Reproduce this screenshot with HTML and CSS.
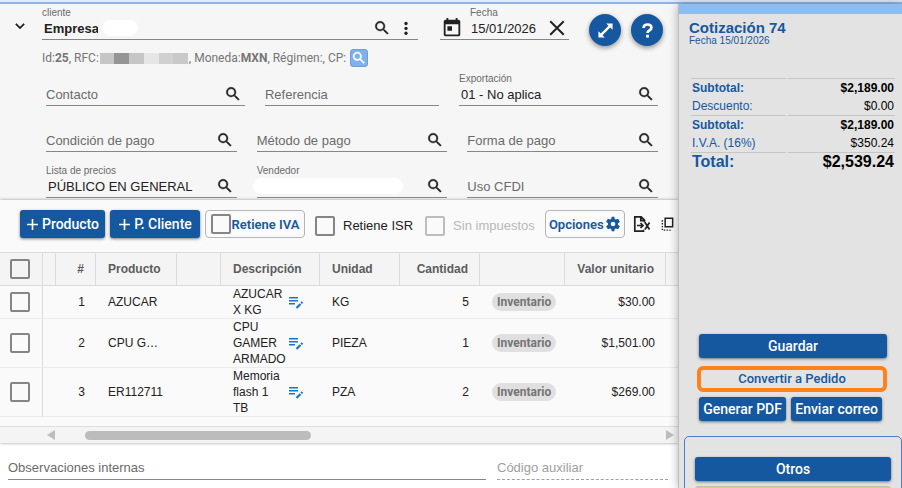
FILE: index.html
```
<!DOCTYPE html>
<html lang="es">
<head>
    <meta charset="UTF-8">
    <meta name="viewport" content="width=device-width, initial-scale=1.0">
    <title>Cotización 74</title>
    <link rel="stylesheet" href="styles.css">
</head>
<body>
    <!-- Shared icons -->
    <svg class="sprite" aria-hidden="true">
        <symbol id="search" viewBox="0 0 24 24"><path d="M15.5 14h-.79l-.28-.27A6.47 6.47 0 0 0 16 9.5 6.5 6.5 0 1 0 9.5 16c1.61 0 3.09-.59 4.23-1.57l.27.28v.79l5 4.99L20.49 19l-4.99-5zm-6 0C7.01 14 5 11.99 5 9.5S7.01 5 9.5 5 14 7.01 14 9.5 11.99 14 9.5 14z" stroke="currentColor" stroke-width="0.5"/></symbol>
        <symbol id="plus" viewBox="0 0 24 24"><path d="M10.5 2h3v8.5H22v3h-8.5V22h-3v-8.5H2v-3h8.5z"/></symbol>
        <symbol id="edit-note" viewBox="0 0 16 16"><path d="M1 3h9v1.500H1zM1 6h9v1.500H1zM1 9h6v1.500H1z"/><path d="M8.500 14l4-4M13.200 9.300l1.300-1.300" fill="none" stroke="currentColor" stroke-width="2.200"/></symbol>
    </svg>

    <div class="top-strip"></div>
    <div class="layout">
        <main class="content">
            <section class="client-form">
                <div class="client-row">
                    <button class="icon-btn chevron" type="button" aria-label="Contraer">
                        <svg class="icon" viewBox="0 0 24 24"><path d="M7.400 8.600 12 13.200l4.600-4.600L18 10l-6 6-6-6z" stroke="currentColor" stroke-width="0.6"/></svg>
                    </button>
                    <div class="field client">
                        <label for="cliente">cliente</label>
                        <div class="control">
                            <input class="client-name" type="text" id="cliente" value="Empresa">
                            <span class="mask short"></span>
                            <button class="icon-btn push" type="button" aria-label="Buscar cliente"><svg class="icon"><use href="#search"/></svg></button>
                            <button class="icon-btn" type="button" aria-label="Más opciones"><svg class="icon" viewBox="0 0 24 24"><circle cx="12" cy="6" r="2.200"/><circle cx="12" cy="12.500" r="2.200"/><circle cx="12" cy="19" r="2.200"/></svg></button>
                        </div>
                    </div>
                    <div class="field date">
                        <label for="fecha">Fecha</label>
                        <div class="control">
                            <svg class="icon calendar" viewBox="0 0 24 24"><path d="M19 3h-1V1h-2v2H8V1H6v2H5a2 2 0 0 0-2 2v14c0 1.100.9 2 2 2h14a2 2 0 0 0 2-2V5a2 2 0 0 0-2-2zm0 16H5V8h14v11zM7 10h5v5H7z"/></svg>
                            <input type="text" id="fecha" value="15/01/2026">
                            <button class="icon-btn" type="button" aria-label="Borrar fecha"><svg class="icon clear" viewBox="0 0 24 24"><path d="M3 3l18 18M21 3L3 21" fill="none" stroke="currentColor" stroke-width="2.600"/></svg></button>
                        </div>
                    </div>
                    <button class="round-btn" type="button" aria-label="Expandir">
                        <svg viewBox="0 0 24 24"><path d="M22 2v9l-3.300-3.300-11 11L11 22H2v-9l3.300 3.300 11-11L13 2z"/></svg>
                    </button>
                    <button class="round-btn" type="button" aria-label="Ayuda">
                        <svg viewBox="0 0 24 24"><path d="M6.500 8.500C6.500 5 9 3.500 12 3.500s5.500 1.600 5.500 4.500c0 4-5.500 3.800-5.500 7.500" fill="none" stroke="currentColor" stroke-width="3.800"/><path d="M10 18h4v4h-4z"/></svg>
                    </button>
                </div>

                <div class="client-meta">
                    <span>Id:<b>25</b>, RFC:</span>
                    <span class="pixels"><i class="c1"></i><i class="c2"></i><i class="c1"></i><i class="c3"></i><i class="c4"></i><i class="c5"></i></span>
                    <span>, Moneda:<b>MXN</b>, Régimen:, CP:</span>
                    <button class="cp-btn" type="button" aria-label="Buscar CP"><svg class="icon"><use href="#search"/></svg></button>
                </div>

                <div class="fields fields-top">
                    <div class="field">
                        <div class="control">
                            <input type="text" placeholder="Contacto" aria-label="Contacto">
                            <button class="icon-btn" type="button" aria-label="Buscar contacto"><svg class="icon"><use href="#search"/></svg></button>
                        </div>
                    </div>
                    <div class="field">
                        <div class="control">
                            <input type="text" placeholder="Referencia" aria-label="Referencia">
                        </div>
                    </div>
                    <div class="field">
                        <label for="exportacion">Exportación</label>
                        <div class="control filled">
                            <input type="text" id="exportacion" value="01 - No aplica">
                            <button class="icon-btn" type="button" aria-label="Buscar exportación"><svg class="icon"><use href="#search"/></svg></button>
                        </div>
                    </div>
                </div>

                <div class="fields">
                    <div class="field">
                        <div class="control">
                            <input type="text" placeholder="Condición de pago" aria-label="Condición de pago">
                            <button class="icon-btn" type="button" aria-label="Buscar condición"><svg class="icon"><use href="#search"/></svg></button>
                        </div>
                    </div>
                    <div class="field">
                        <div class="control">
                            <input type="text" placeholder="Método de pago" aria-label="Método de pago">
                            <button class="icon-btn" type="button" aria-label="Buscar método"><svg class="icon"><use href="#search"/></svg></button>
                        </div>
                    </div>
                    <div class="field">
                        <div class="control">
                            <input type="text" placeholder="Forma de pago" aria-label="Forma de pago">
                            <button class="icon-btn" type="button" aria-label="Buscar forma"><svg class="icon"><use href="#search"/></svg></button>
                        </div>
                    </div>
                    <div class="field">
                        <label for="lista">Lista de precios</label>
                        <div class="control filled">
                            <input type="text" id="lista" value="PÚBLICO EN GENERAL">
                            <button class="icon-btn" type="button" aria-label="Buscar lista"><svg class="icon"><use href="#search"/></svg></button>
                        </div>
                    </div>
                    <div class="field">
                        <span class="caption">Vendedor</span>
                        <div class="control">
                            <span class="mask long"></span>
                            <button class="icon-btn push" type="button" aria-label="Buscar vendedor"><svg class="icon"><use href="#search"/></svg></button>
                        </div>
                    </div>
                    <div class="field">
                        <div class="control">
                            <input type="text" placeholder="Uso CFDI" aria-label="Uso CFDI">
                            <button class="icon-btn" type="button" aria-label="Buscar uso"><svg class="icon"><use href="#search"/></svg></button>
                        </div>
                    </div>
                </div>
            </section>

            <section class="products">
                <div class="toolbar">
                    <button class="btn add" type="button"><svg><use href="#plus"/></svg>Producto</button>
                    <button class="btn add wide" type="button"><svg><use href="#plus"/></svg>P. Cliente</button>
                    <label class="outlined iva"><input type="checkbox">Retiene IVA</label>
                    <label class="check"><input type="checkbox">Retiene ISR</label>
                    <label class="check disabled"><input type="checkbox" disabled>Sin impuestos</label>
                    <button class="outlined options" type="button">Opciones<svg viewBox="0 0 24 24"><path d="M19.430 12.980a7.800 7.800 0 0 0 0-1.960l2.900-2.200-2.600-4.700-3.400 1.300a7.500 7.500 0 0 0-1.700-1L14 1h-4l-.6 3.400a7.500 7.500 0 0 0-1.700 1L4.300 4.100l-2.600 4.700 2.900 2.200a7.800 7.800 0 0 0 0 2l-2.900 2.200 2.600 4.700 3.400-1.300c.5.4 1.100.7 1.700 1L10 23h4l.6-3.400c.6-.3 1.200-.6 1.700-1l3.400 1.300 2.600-4.700zM12 15.500a3.500 3.500 0 1 1 0-7 3.500 3.500 0 0 1 0 7z"/></svg></button>
                    <button class="icon-btn excel" type="button" aria-label="Exportar a Excel">
                        <svg class="line-icon" viewBox="0 0 18 18"><path d="M10.500 14.800v1.400H1.800V1.800h6.400l3.300 3.300v2.400M7.800 2v3.600h3.600M4 10.500h6M7.500 8l2.500 2.500L7.500 13M12 7.500l4.500 7M16.500 7.500L12 14.500" stroke-width="1.700"/></svg>
                    </button>
                    <button class="icon-btn copy" type="button" aria-label="Duplicar">
                        <svg class="line-icon" viewBox="0 0 16 16"><path d="M5.500 1.800h8v9h-8z" stroke-width="1.600"/><path d="M2.500 4v10.500h10" stroke-width="1.500" stroke-dasharray="1.500 1.500"/></svg>
                    </button>
                </div>

                <div class="table-wrap">
                    <table class="grid">
                        <colgroup>
                            <col class="w-check"><col class="w-thin"><col class="w-num"><col class="w-prod"><col class="w-blank"><col class="w-desc"><col class="w-unit"><col class="w-unit"><col class="w-inv"><col><col class="w-last">
                        </colgroup>
                        <thead>
                            <tr>
                                <th class="sel"><input type="checkbox" aria-label="Seleccionar todo"></th>
                                <th></th>
                                <th class="num">#</th>
                                <th>Producto</th>
                                <th></th>
                                <th>Descripción</th>
                                <th>Unidad</th>
                                <th class="num">Cantidad</th>
                                <th></th>
                                <th class="num">Valor unitario</th>
                                <th></th>
                            </tr>
                        </thead>
                        <tbody>
                            <tr>
                                <td class="sel"><input type="checkbox" aria-label="Seleccionar 1"></td>
                                <td></td>
                                <td class="num">1</td>
                                <td>AZUCAR</td>
                                <td></td>
                                <td><div class="desc"><span>AZUCAR X KG</span><svg><use href="#edit-note"/></svg></div></td>
                                <td>KG</td>
                                <td class="num">5</td>
                                <td><span class="chip">Inventario</span></td>
                                <td class="num">$30.00</td>
                                <td></td>
                            </tr>
                            <tr>
                                <td class="sel"><input type="checkbox" aria-label="Seleccionar 2"></td>
                                <td></td>
                                <td class="num">2</td>
                                <td>CPU G…</td>
                                <td></td>
                                <td><div class="desc"><span>CPU GAMER ARMADO</span><svg><use href="#edit-note"/></svg></div></td>
                                <td>PIEZA</td>
                                <td class="num">1</td>
                                <td><span class="chip">Inventario</span></td>
                                <td class="num">$1,501.00</td>
                                <td></td>
                            </tr>
                            <tr>
                                <td class="sel"><input type="checkbox" aria-label="Seleccionar 3"></td>
                                <td></td>
                                <td class="num">3</td>
                                <td>ER112711</td>
                                <td></td>
                                <td><div class="desc"><span>Memoria flash 1 TB</span><svg><use href="#edit-note"/></svg></div></td>
                                <td>PZA</td>
                                <td class="num">2</td>
                                <td><span class="chip">Inventario</span></td>
                                <td class="num">$269.00</td>
                                <td></td>
                            </tr>
                        </tbody>
                    </table>
                </div>
                <div class="scrollbar">
                    <span class="arrow left"></span>
                    <div class="track"><div class="thumb"></div></div>
                    <span class="arrow right"></span>
                </div>
            </section>

            <section class="notes">
                <input class="note-main" type="text" placeholder="Observaciones internas" aria-label="Observaciones internas">
                <input class="note-code" type="text" placeholder="Código auxiliar" aria-label="Código auxiliar" disabled>
            </section>
        </main>

        <aside class="sidebar">
            <div class="sidebar-bar"></div>
            <div class="summary">
                <h1>Cotización 74</h1>
                <p>Fecha 15/01/2026</p>
                <table class="totals">
                    <tr class="line strong"><th>Subtotal:</th><td>$2,189.00</td></tr>
                    <tr><th>Descuento:</th><td>$0.00</td></tr>
                    <tr class="line strong"><th>Subtotal:</th><td>$2,189.00</td></tr>
                    <tr><th>I.V.A. (16%)</th><td>$350.24</td></tr>
                    <tr class="line total"><th>Total:</th><td>$2,539.24</td></tr>
                </table>
            </div>
            <div class="actions">
                <button class="btn full" type="button">Guardar</button>
                <button class="btn-highlight" type="button">Convertir a Pedido</button>
                <div class="pair">
                    <button class="btn" type="button">Generar PDF</button>
                    <button class="btn" type="button">Enviar correo</button>
                </div>
            </div>
            <div class="others">
                <button class="btn full" type="button">Otros</button>
                <div class="next-item"></div>
            </div>
        </aside>
    </div>
</body>
</html>
```
FILE: styles.css
```
* {
    margin: 0;
    padding: 0;
    box-sizing: border-box;
}

body {
    display: flex;
    flex-direction: column;
    height: 100vh;
    overflow: hidden;
    font-family: "Liberation Sans", Arial, sans-serif;
    font-size: 13px;
    color: #212121;
    background-color: #fff;
}

button,
input {
    font-family: inherit;
    font-size: inherit;
    color: inherit;
}

button {
    border: none;
    background: none;
    cursor: pointer;
}

svg {
    display: block;
    flex: none;
    fill: currentColor;
}

.line-icon {
    fill: none;
    stroke: currentColor;
}

.sprite {
    position: absolute;
    width: 0;
    height: 0;
}

.top-strip {
    flex: none;
    height: 4px;
    background-color: #dfeafa;
    border-bottom: 2px solid #90b4e8;
}

.layout {
    display: flex;
    flex: 1;
    min-height: 0;
}

.content {
    flex: 1;
    min-width: 0;
}

/* Client form */
.client-form {
    background-color: #f6f6f6;
    padding: 3px 20px 2px 0;
}

.client-row {
    display: flex;
    align-items: flex-start;
    margin-right: -5px;
}

.chevron {
    width: 42px;
    padding-left: 11px;
    margin-top: 10px;
}

.icon {
    width: 18px;
    height: 18px;
}

.icon-btn {
    display: flex;
    flex: none;
    align-items: center;
    color: #212121;
}

.field {
    display: flex;
    flex-direction: column;
    justify-content: flex-end;
    height: 33px;
    min-width: 0;
}

.field label,
.caption {
    height: 12px;
    font-size: 10px;
    line-height: 12px;
    color: #6b6b6b;
}

.control {
    display: flex;
    align-items: center;
    height: 21px;
    padding: 0 3px 2px 0;
    border-bottom: 1px solid #868686;
}

.control.filled {
    padding-left: 2px;
}

.control input {
    flex: 1;
    min-width: 0;
    width: 100%;
    height: 18px;
    border: none;
    outline: none;
    background: none;
}

.control input::placeholder {
    color: #6b6b6b;
    opacity: 1;
}

.push {
    margin-left: auto;
}

.client {
    flex: 1;
    margin-right: 22px;
}

.client .control {
    gap: 6px;
    padding-left: 2px;
}

.control .client-name {
    flex: none;
    width: 54px;
    font-weight: bold;
}

.mask {
    flex: none;
    height: 16px;
    border-radius: 8px;
    background-color: #fff;
}

.mask.short {
    width: 36px;
    margin-left: -2px;
}

.mask.long {
    width: 150px;
    margin-left: -4px;
}

.date {
    width: 129px;
    margin-right: 20px;
}

.date label {
    margin-left: 30px;
}

.date .control input {
    margin-left: 7px;
}

.icon.calendar {
    width: 24px;
    height: 22px;
}

.round-btn {
    display: flex;
    flex: none;
    align-items: center;
    justify-content: center;
    width: 32px;
    height: 32px;
    margin-top: 7px;
    border-radius: 50%;
    color: #fff;
    background-color: #1558a0;
    box-shadow: 0 2px 5px rgba(0, 0, 0, 0.4);
}

.round-btn + .round-btn {
    margin-left: 10px;
}

.round-btn svg {
    width: 17px;
    height: 17px;
}

.client-meta {
    display: flex;
    align-items: center;
    height: 18px;
    margin: 3px 0 0 42px;
    font-family: Roboto, sans-serif;
    font-size: 12px;
    color: #757575;
    white-space: nowrap;
}

.pixels {
    display: flex;
    width: 88px;
    height: 11px;
    margin: 0 1px;
}

.pixels i {
    flex: 1;
}

.c1 { background-color: #c6c6c6; }
.c2 { background-color: #959595; }
.c3 { background-color: #e6e6e6; }
.c4 { background-color: #d0d0d0; }
.c5 { background-color: #c9c9c9; }

.cp-btn {
    width: 18px;
    height: 18px;
    margin-left: 4px;
    border: 1px solid #6f9fd0;
    border-radius: 3px;
    color: #fff;
    background-color: #7fb2ea;
}

.cp-btn .icon {
    width: 16px;
    height: 16px;
}

.fields {
    display: grid;
    grid-template-columns: repeat(3, 1fr);
    gap: 13px 20px;
    margin: 13px 0 0 46px;
}

.fields-top {
    grid-template-columns: 8fr 7fr 8fr;
    margin-top: 6px;
}

/* Products */
.products {
    background-color: #fafafa;
    box-shadow: 0 0 3px rgba(0, 0, 0, 0.4);
}

.toolbar {
    display: flex;
    align-items: center;
    height: 52px;
    padding: 0 3px 4px 20px;
    white-space: nowrap;
    overflow: hidden;
}

.btn {
    display: flex;
    align-items: center;
    justify-content: center;
    height: 24px;
    border-radius: 3px;
    font-family: Roboto, sans-serif;
    font-size: 14px;
    font-weight: 500;
    color: #fff;
    background-color: #1558a0;
    box-shadow: 0 1px 3px rgba(0, 0, 0, 0.5);
    white-space: nowrap;
}

.btn.add {
    gap: 3px;
    width: 85px;
    height: 28px;
    margin-right: 5px;
    flex: none;
}

.btn.add.wide {
    width: 90px;
}

.btn.add svg {
    width: 13px;
    height: 13px;
}

.outlined {
    display: flex;
    flex: none;
    align-items: center;
    justify-content: center;
    height: 28px;
    border: 1px solid #b5b5b5;
    border-radius: 4px;
    font-family: Roboto, sans-serif;
    font-size: 13px;
    font-weight: 600;
    color: #1558a0;
}

.iva {
    width: 100px;
    gap: 1px;
    margin-right: 10px;
}

.options {
    width: 80px;
    gap: 1px;
    margin-right: 8px;
}

.options svg {
    width: 16px;
    height: 16px;
}

input[type="checkbox"] {
    appearance: none;
    flex: none;
    display: block;
    width: 20px;
    height: 20px;
    border: 2px solid #858585;
    border-radius: 2px;
}

.check {
    display: flex;
    flex: none;
    align-items: center;
    gap: 8px;
    margin: 3px 12px 0 0;
}

.check.disabled {
    margin-right: 10px;
    color: #b8b8b8;
}

.check.disabled input {
    border-color: #bdbdbd;
}

.excel svg {
    width: 18px;
    height: 18px;
}

.copy {
    margin-left: auto;
}

.copy svg {
    width: 15px;
    height: 16px;
}

.table-wrap {
    padding-bottom: 9px;
    overflow: hidden;
}

.grid {
    width: 100%;
    table-layout: fixed;
    border-collapse: separate;
    border-spacing: 0;
    font-size: 12px;
    line-height: 16px;
}

.w-check { width: 43px; }
.w-thin { width: 13px; }
.w-num { width: 40px; }
.w-prod { width: 81px; }
.w-blank { width: 44px; }
.w-desc { width: 99px; }
.w-unit { width: 80px; }
.w-inv { width: 85px; }
.w-last { width: 12px; }

.grid th {
    height: 34px;
    padding: 0 12px;
    border: 1px solid #dcdcdc;
    border-width: 1px 1px 1px 0;
    text-align: left;
    color: #5c5c5c;
    background-color: #f4f4f4;
    white-space: nowrap;
}

.grid th:last-child {
    border-right: none;
}

.grid td {
    padding: 0 12px;
    border-bottom: 1px solid #ebebeb;
}

.grid .sel {
    padding: 0 10px;
    border-right: 1px solid #dcdcdc;
}

.grid .num {
    text-align: right;
    padding: 0 11px 0 0;
}

.grid th:empty,
.grid td:empty {
    padding: 0;
}

.desc {
    display: flex;
    align-items: center;
    gap: 3px;
}

.desc span {
    width: 52px;
}

.desc svg {
    width: 16px;
    height: 16px;
    color: #1976c0;
}

.chip {
    display: inline-block;
    height: 18px;
    padding: 0 5px;
    border-radius: 9px;
    font-family: Roboto, sans-serif;
    font-size: 12px;
    font-weight: bold;
    line-height: 18px;
    vertical-align: middle;
    color: #757575;
    background-color: #e0e0e0;
}

.scrollbar {
    display: flex;
    align-items: center;
    height: 17px;
    padding: 0 4px 0 47px;
    border-top: 1px solid #dedede;
    background-color: #f4f4f4;
}

.arrow {
    border: 5px solid transparent;
}

.arrow.left {
    border-right: 8px solid #bdbdbd;
    border-left: none;
}

.arrow.right {
    border-left: 8px solid #bdbdbd;
    border-right: none;
}

.track {
    flex: 1;
    padding: 0 30px;
}

.thumb {
    width: 41%;
    height: 9px;
    border-radius: 5px;
    background-color: #bcbcbc;
}

/* Notes */
.notes {
    display: flex;
    gap: 11px;
    padding: 13px 10px 0 8px;
}

.notes input {
    min-width: 0;
    height: 24px;
    border: none;
    border-bottom: 1px solid #868686;
    background: none;
}

.notes input::placeholder {
    color: #6b6b6b;
    opacity: 1;
}

.notes .note-main {
    flex: 478;
}

.notes .note-code {
    flex: 171;
    border-bottom: 1px dashed #a0a0a0;
}

.notes .note-code::placeholder {
    color: #9e9e9e;
}

/* Sidebar */
.sidebar {
    z-index: 1;
    flex: none;
    width: 224px;
    border-left: 1px solid #bdbdbd;
    background-color: #e3e3e3;
    box-shadow: 0 0 9px rgba(0, 0, 0, 0.3);
    overflow: hidden;
}

.sidebar-bar {
    height: 10px;
    background-color: #8bbdee;
}

.summary {
    min-height: 320px;
    padding: 5px 5px 0 10px;
    color: #1558a0;
}

.summary h1 {
    font-size: 15px;
    line-height: 17px;
}

.summary p {
    font-size: 10px;
    line-height: 10px;
}

.totals {
    width: 100%;
    margin-top: 32px;
    border-spacing: 2px 0;
    font-size: 12px;
    line-height: 18px;
}

.totals th {
    width: 47%;
    padding-left: 1px;
    text-align: left;
    font-weight: normal;
}

.totals td {
    padding-right: 1px;
    text-align: right;
    color: #000;
}

.line th,
.line td {
    border-top: 1px solid #c6c6c6;
}

.strong th,
.strong td,
.total th,
.total td {
    font-weight: bold;
}

.total {
    font-size: 16px;
}

.actions {
    display: flex;
    flex-direction: column;
    padding: 0 15px 0 20px;
}

.btn.full {
    width: 100%;
}

.btn-highlight {
    height: 26px;
    margin: 8px 0 5px -2px;
    border: 4px solid #ff8119;
    border-radius: 6px;
    font-family: Roboto, sans-serif;
    font-size: 13px;
    font-weight: 500;
    line-height: 18px;
    color: #1558a0;
}

.pair {
    display: flex;
    gap: 5px;
    padding-right: 5px;
}

.pair .btn {
    flex: 1 1 auto;
}

.others {
    height: 80px;
    margin: 15px 0 0 5px;
    padding: 20px 10px 0;
    border: 1px solid #4a7fc4;
    border-radius: 5px;
}

.next-item {
    height: 24px;
    margin-top: 5px;
    border: 1px solid #bdbdbd;
    border-radius: 3px;
    background-color: #ffcf10;
}
```
